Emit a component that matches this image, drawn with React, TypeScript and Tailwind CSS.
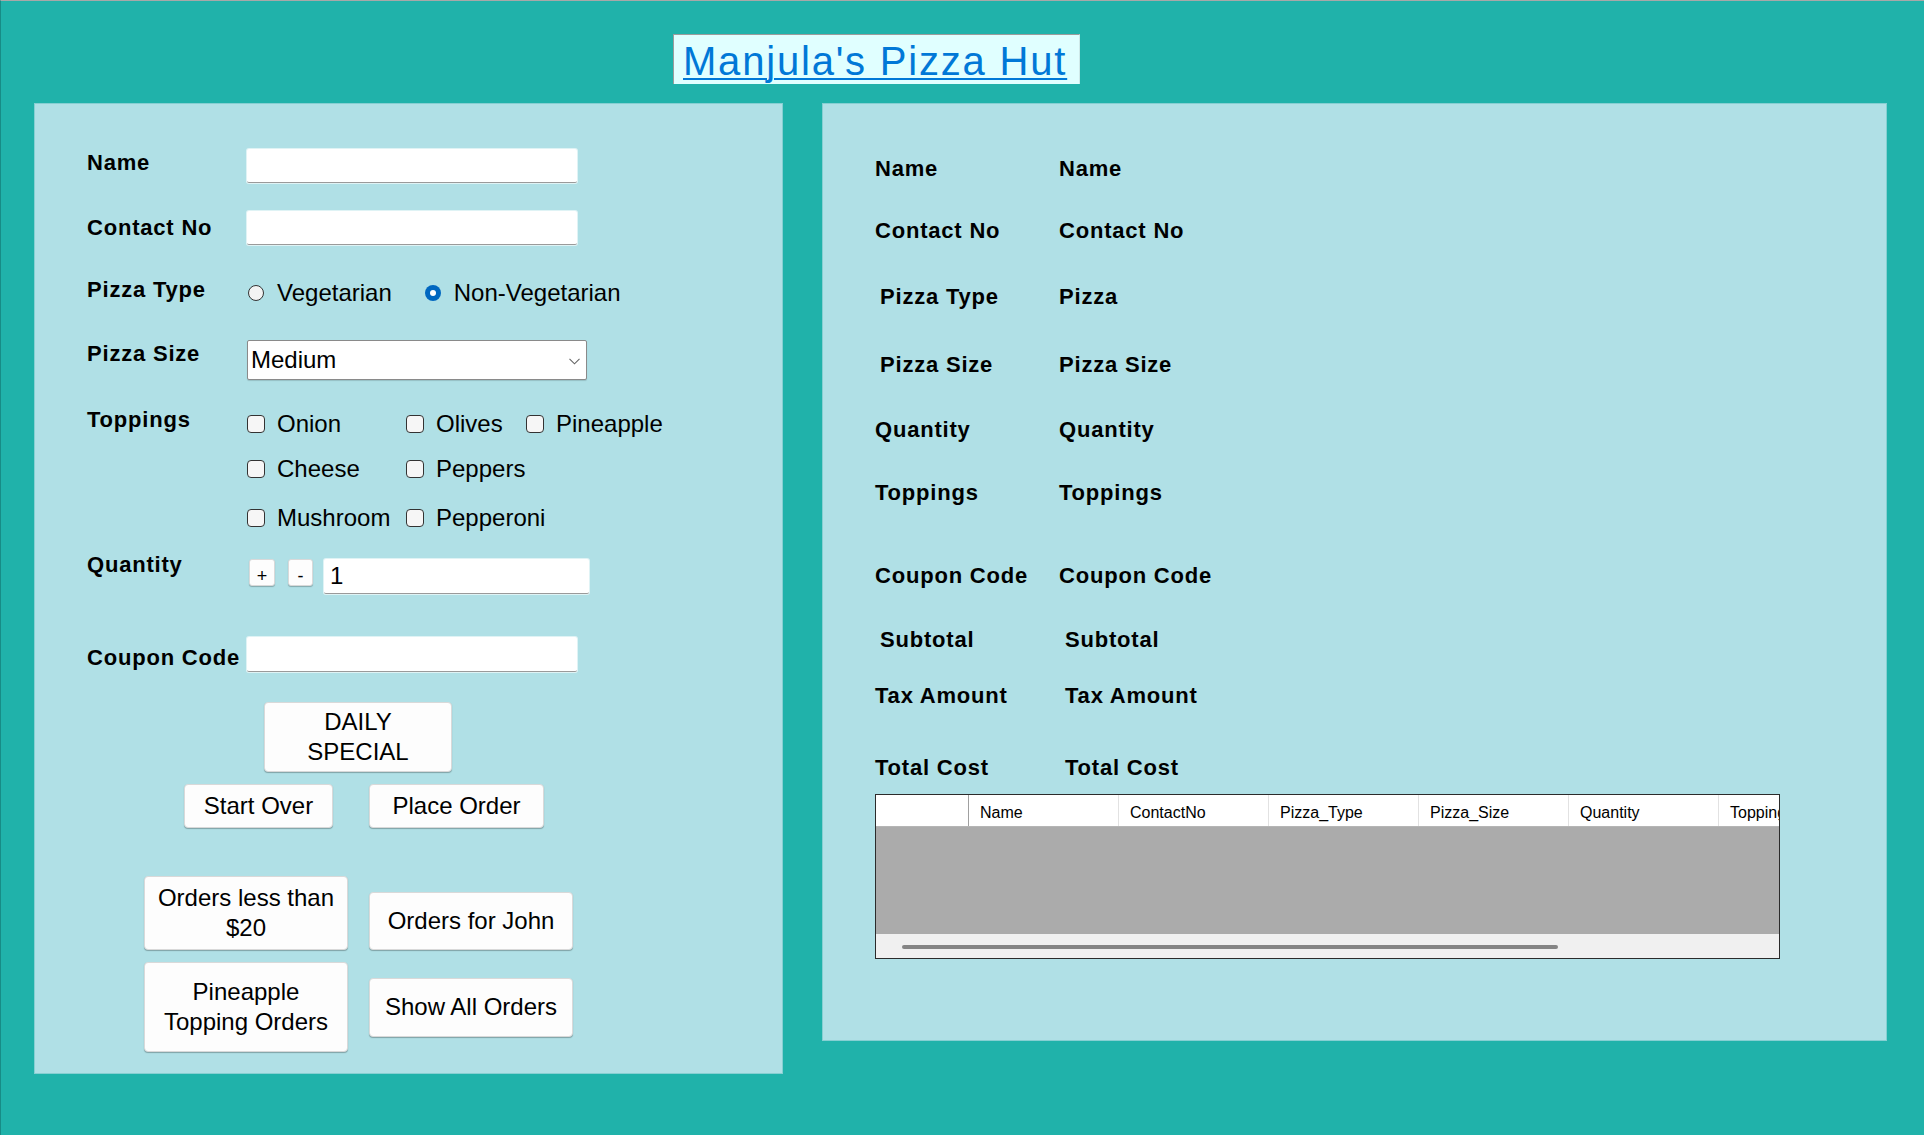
import React from "react";

function Label({ children, className = "" }: { children: React.ReactNode; className?: string }) {
  return (
    <div className={`w-[160px] shrink-0 text-[22px] leading-[22px] font-bold tracking-[0.8px] text-black whitespace-nowrap ${className}`}>
      {children}
    </div>
  );
}

function TextBox({ className = "", children }: { className?: string; children?: React.ReactNode }) {
  return (
    <div className={`bg-white border-b border-[#9a9a9a] rounded-[2px] shadow-[0_0_0_1px_rgba(255,255,255,0.6)] ${className}`}>
      {children}
    </div>
  );
}

function Check({ label, w }: { label: string; w?: string }) {
  return (
    <div className={`flex items-center shrink-0 ${w ?? ""}`}>
      <span className="w-[18px] h-[18px] border border-[#333] rounded-[4px] bg-[#f6f6f6] shrink-0" />
      <span className="ml-[12px] whitespace-nowrap">{label}</span>
    </div>
  );
}

function Btn({ children, className = "" }: { children: React.ReactNode; className?: string }) {
  return (
    <div
      className={`bg-[#fdfdfd] rounded-[4px] border border-[#d9d9d9] shadow-[0_1px_1px_rgba(0,0,0,0.28)] text-[24px] leading-[30px] text-black flex items-center justify-center text-center shrink-0 ${className}`}
    >
      {children}
    </div>
  );
}

function RRow({
  label,
  value,
  mt,
  indent = "",
  w = "w-[184px]",
}: {
  label: string;
  value: string;
  mt: string;
  indent?: string;
  w?: string;
}) {
  return (
    <div className={`flex text-[22px] leading-[22px] font-bold tracking-[0.8px] text-black whitespace-nowrap ${mt}`}>
      <div className={`${w} shrink-0 ${indent}`}>{label}</div>
      <div>{value}</div>
    </div>
  );
}

export default function App() {
  const cols = ["Name", "ContactNo", "Pizza_Type", "Pizza_Size", "Quantity", "Toppings"];
  return (
    <div className="w-[1924px] h-[1135px] bg-[#20b2aa] border-t border-t-[#a8a8a8] border-l border-l-[#178c86] font-[Liberation_Sans,Arial,sans-serif] text-black overflow-hidden">
      {/* Title */}
      <div className="pt-[33px] pl-[672px]">
        <div className="w-[407px] h-[50px] bg-[#e0ffff] border-t border-l border-[#9c9c9c] border-r border-r-[#cfe9e9] pl-[9px] pt-[6px]">
          <span className="text-[40px] leading-[40px] text-[#0078d7] underline decoration-2 underline-offset-[3px] tracking-[1.8px] whitespace-nowrap">
            Manjula's Pizza Hut
          </span>
        </div>
      </div>

      <div className="flex items-start mt-[19px] pl-[33px] gap-[39px]">
        {/* Left panel */}
        <div className="w-[749px] h-[971px] shrink-0 bg-[#b0e0e6] shadow-[inset_0_0_0_1px_#86cfd2] pl-[53px] flex flex-col">
          <div className="flex mt-[46px]">
            <Label className="mt-[3px]">Name</Label>
            <TextBox className="w-[330px] h-[34px]" />
          </div>
          <div className="flex mt-[28px]">
            <Label className="mt-[6px]">Contact No</Label>
            <TextBox className="w-[330px] h-[34px]" />
          </div>
          <div className="flex mt-[34px]">
            <Label>Pizza Type</Label>
            <div className="flex items-center mt-[2px] text-[24px] leading-[24px]">
              <span className="ml-[1px] w-[16px] h-[16px] rounded-full border border-[#333] bg-[#f3f3f3] shrink-0" />
              <span className="ml-[13px]">Vegetarian</span>
              <span className="ml-[33px] w-[16px] h-[16px] rounded-full bg-[#0067c0] flex items-center justify-center shrink-0">
                <span className="w-[6px] h-[6px] rounded-full bg-white" />
              </span>
              <span className="ml-[13px]">Non-Vegetarian</span>
            </div>
          </div>
          <div className="flex mt-[35px]">
            <Label className="mt-[3px]">Pizza Size</Label>
            <div className="w-[340px] h-[40px] bg-white border border-[#8a8a8a] rounded-[2px] shadow-[0_1px_1px_rgba(0,0,0,0.15)] flex items-center justify-between pl-[3px] pr-[6px] text-[24px] leading-[24px]">
              <span>Medium</span>
              <svg width="11" height="7" viewBox="0 0 11 7" className="mt-[2px]">
                <polyline points="0.5,0.8 5.5,5.8 10.5,0.8" fill="none" stroke="#666" strokeWidth="1.1" />
              </svg>
            </div>
          </div>
          <div className="flex mt-[29px]">
            <Label>Toppings</Label>
            <div className="flex flex-col mt-[3px] text-[24px] leading-[24px]">
              <div className="flex">
                <Check label="Onion" w="w-[159px]" />
                <Check label="Olives" w="w-[120px]" />
                <Check label="Pineapple" />
              </div>
              <div className="flex mt-[21px]">
                <Check label="Cheese" w="w-[159px]" />
                <Check label="Peppers" w="w-[120px]" />
              </div>
              <div className="flex mt-[25px]">
                <Check label="Mushroom" w="w-[159px]" />
                <Check label="Pepperoni" w="w-[120px]" />
              </div>
            </div>
          </div>
          <div className="flex mt-[24px]">
            <Label>Quantity</Label>
            <div className="flex items-start mt-[5px]">
              <div className="ml-[2px] w-[26px] h-[27px] bg-[#fdfdfd] border border-[#d9d9d9] rounded-[3px] shadow-[0_1px_1px_rgba(0,0,0,0.25)] flex items-center justify-center pt-[7px] text-[18px] leading-[18px]">
                +
              </div>
              <div className="ml-[13px] w-[25px] h-[27px] bg-[#fdfdfd] border border-[#d9d9d9] rounded-[3px] shadow-[0_1px_1px_rgba(0,0,0,0.25)] flex items-center justify-center pt-[7px] text-[18px] leading-[18px]">
                -
              </div>
              <TextBox className="ml-[11px] w-[265px] h-[35px] pl-[6px] flex items-center text-[24px] leading-[24px]">1</TextBox>
            </div>
          </div>
          <div className="flex mt-[43px]">
            <Label className="mt-[10px]">Coupon Code</Label>
            <TextBox className="w-[330px] h-[35px]" />
          </div>

          <Btn className="mt-[30px] ml-[177px] w-[188px] h-[70px]">
            DAILY
            <br />
            SPECIAL
          </Btn>
          <div className="flex mt-[12px] ml-[97px]">
            <Btn className="w-[149px] h-[44px]">Start Over</Btn>
            <Btn className="ml-[36px] w-[175px] h-[44px]">Place Order</Btn>
          </div>
          <div className="flex items-end mt-[48px] ml-[57px]">
            <Btn className="w-[204px] h-[74px]">
              Orders less than
              <br />
              $20
            </Btn>
            <Btn className="ml-[21px] w-[204px] h-[58px]">Orders for John</Btn>
          </div>
          <div className="flex items-center mt-[12px] ml-[57px]">
            <Btn className="w-[204px] h-[90px]">
              Pineapple
              <br />
              Topping Orders
            </Btn>
            <Btn className="ml-[21px] w-[204px] h-[59px]">Show All Orders</Btn>
          </div>
        </div>

        {/* Right panel */}
        <div className="w-[1065px] h-[938px] shrink-0 bg-[#b0e0e6] shadow-[inset_0_0_0_1px_#86cfd2] pl-[53px] flex flex-col">
          <RRow label="Name" value="Name" mt="mt-[55px]" />
          <RRow label="Contact No" value="Contact No" mt="mt-[40px]" />
          <RRow label="Pizza Type" value="Pizza" mt="mt-[44px]" indent="pl-[5px]" />
          <RRow label="Pizza Size" value="Pizza Size" mt="mt-[46px]" indent="pl-[5px]" />
          <RRow label="Quantity" value="Quantity" mt="mt-[43px]" />
          <RRow label="Toppings" value="Toppings" mt="mt-[41px]" />
          <RRow label="Coupon Code" value="Coupon Code" mt="mt-[61px]" />
          <RRow label="Subtotal" value="Subtotal" mt="mt-[42px]" indent="pl-[5px]" w="w-[190px]" />
          <RRow label="Tax Amount" value="Tax Amount" mt="mt-[34px]" w="w-[190px]" />
          <RRow label="Total Cost" value="Total Cost" mt="mt-[50px]" w="w-[190px]" />

          <div className="mt-[15px] w-[905px] h-[165px] border border-[#2b2b2b] flex flex-col overflow-hidden bg-[#f0f0f0]">
            <div className="h-[32px] shrink-0 bg-white flex border-b border-[#b5b5b5] overflow-hidden">
              <div className="w-[93px] shrink-0 border-r border-[#a0a0a0]" />
              {cols.map((c) => (
                <div
                  key={c}
                  className="w-[150px] shrink-0 border-r border-[#e2e2e2] pl-[11px] pt-[4px] flex items-center text-[16px] leading-[16px] whitespace-nowrap"
                >
                  {c}
                </div>
              ))}
            </div>
            <div className="h-[107px] shrink-0 bg-[#ababab]" />
            <div className="flex-1 bg-[#f0f0f0] pt-[11px] pl-[26px]">
              <div className="w-[656px] h-[4px] rounded-full bg-[#858585]" />
            </div>
          </div>
        </div>
      </div>
    </div>
  );
}
